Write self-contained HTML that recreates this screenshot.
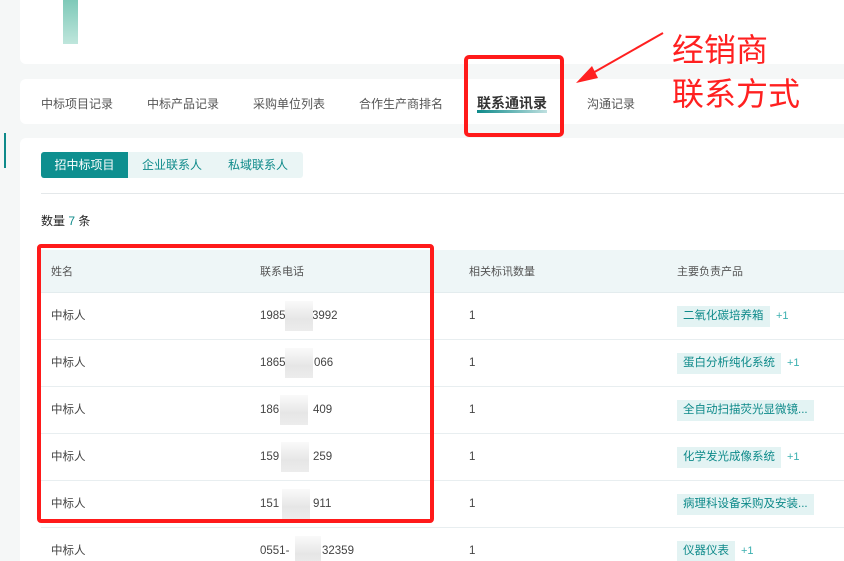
<!DOCTYPE html><html><head><meta charset="utf-8"><style>
*{margin:0;padding:0;box-sizing:border-box}
html,body{width:844px;height:561px;overflow:hidden}
body{background:#f5f7f7;font-family:"Liberation Sans","Noto Sans CJK SC",sans-serif;position:relative;font-size:12px;color:#333}
.abs{position:absolute}
.card{position:absolute;background:#fff;border-radius:6px;left:20px;width:840px}
.tab{position:absolute;top:95px;font-size:12px;color:#555}
.row{position:absolute;left:41px;width:803px;height:47px;border-bottom:1px solid #e8eef0}
.row span{position:absolute;top:0;line-height:46px;font-size:11.5px;color:#444}
.tag{position:absolute;top:13px;left:636px;background:#e3f3f3;color:#0e8a8a;font-size:11.5px;padding:0 6px;height:21px;line-height:21px;white-space:nowrap}
.row span.plus{color:#3bb0b0;font-size:11px}
.blur{position:absolute;left:244px;width:28px;height:30px;top:8px;background:linear-gradient(#fafafa,#e6e6e6 60%,#ececec)}
</style></head><body>
<div class="abs" style="left:4px;top:133px;width:2px;height:35px;background:#0e8a8a"></div>
<div class="card" style="top:-6px;height:70px"></div>
<div class="abs" style="left:63px;top:0;width:15px;height:44px;background:linear-gradient(#7ec9b8,#bfe6dc)"></div>
<div class="card" style="top:79px;height:45px"></div>
<div class="tab" style="left:41px">中标项目记录</div>
<div class="tab" style="left:147px">中标产品记录</div>
<div class="tab" style="left:253px">采购单位列表</div>
<div class="tab" style="left:359px">合作生产商排名</div>
<div class="tab" style="left:477px;font-weight:bold;font-size:14px;top:93px;color:#333">联系通讯录</div>
<div class="abs" style="left:477px;top:110px;width:70px;height:3px;background:linear-gradient(90deg,#0e8a8a,#bfe0e0)"></div>
<div class="tab" style="left:587px">沟通记录</div>
<div class="abs" style="left:464px;top:55px;width:100px;height:82px;border:4px solid #ff1a1a;border-radius:5px"></div>
<svg class="abs" style="left:570px;top:28px" width="100" height="62"><line x1="93" y1="5" x2="14" y2="50" stroke="#ff2020" stroke-width="2"/><polygon points="6,55 22,38 28,50" fill="#ff2020"/></svg>
<div class="abs" style="left:672px;top:28px;font-size:32px;color:#ff2020;line-height:44px">经销商<br>联系方式</div>
<div class="card" style="top:138px;height:440px"></div>
<div class="abs" style="left:41px;top:152px;width:262px;height:26px;background:#eaf5f5;border-radius:3px"></div>
<div class="abs" style="left:41px;top:152px;width:87px;height:26px;background:#0e8f8f;border-radius:3px 0 0 3px;color:#fff;font-size:12px;line-height:26px;text-align:center">招中标项目</div>
<div class="abs" style="left:142px;top:152px;line-height:26px;color:#0e8a8a;font-size:12px">企业联系人</div>
<div class="abs" style="left:228px;top:152px;line-height:26px;color:#0e8a8a;font-size:12px">私域联系人</div>
<div class="abs" style="left:41px;top:193px;width:803px;height:1px;background:#e4e8ea"></div>
<div class="abs" style="left:41px;top:212px;font-size:12px;color:#222">数量 <span style="color:#0e8a8a">7</span> 条</div>
<div class="abs" style="left:41px;top:250px;width:803px;height:43px;background:#eef6f7;border-bottom:1px solid #e3ecee;font-size:11px;color:#555;line-height:44px">
<span class="abs" style="left:10px">姓名</span><span class="abs" style="left:219px">联系电话</span><span class="abs" style="left:428px">相关标讯数量</span><span class="abs" style="left:636px">主要负责产品</span></div>
<div class="row" style="top:293px"><span style="left:10px">中标人</span><span style="left:219px">1985</span><span style="left:271px">3992</span><div class="blur"></div><span style="left:428px">1</span><div class="tag">二氧化碳培养箱</div><span class="plus" style="left:735px">+1</span></div>
<div class="row" style="top:340px"><span style="left:10px">中标人</span><span style="left:219px">1865</span><span style="left:273px">066</span><div class="blur"></div><span style="left:428px">1</span><div class="tag">蛋白分析纯化系统</div><span class="plus" style="left:746px">+1</span></div>
<div class="row" style="top:387px"><span style="left:10px">中标人</span><span style="left:219px">186</span><span style="left:272px">409</span><div class="blur" style="left:239px"></div><span style="left:428px">1</span><div class="tag">全自动扫描荧光显微镜...</div></div>
<div class="row" style="top:434px"><span style="left:10px">中标人</span><span style="left:219px">159</span><span style="left:272px">259</span><div class="blur" style="left:240px"></div><span style="left:428px">1</span><div class="tag">化学发光成像系统</div><span class="plus" style="left:746px">+1</span></div>
<div class="row" style="top:481px"><span style="left:10px">中标人</span><span style="left:219px">151</span><span style="left:272px">911</span><div class="blur" style="left:241px"></div><span style="left:428px">1</span><div class="tag">病理科设备采购及安装...</div></div>
<div class="row" style="top:528px"><span style="left:10px">中标人</span><span style="left:219px">0551-</span><span style="left:281px">32359</span><div class="blur" style="left:254px;width:26px"></div><span style="left:428px">1</span><div class="tag">仪器仪表</div><span class="plus" style="left:700px">+1</span></div>
<div class="abs" style="left:37px;top:244px;width:397px;height:279px;border:4px solid #ff1a1a;border-radius:4px"></div>
</body></html>
